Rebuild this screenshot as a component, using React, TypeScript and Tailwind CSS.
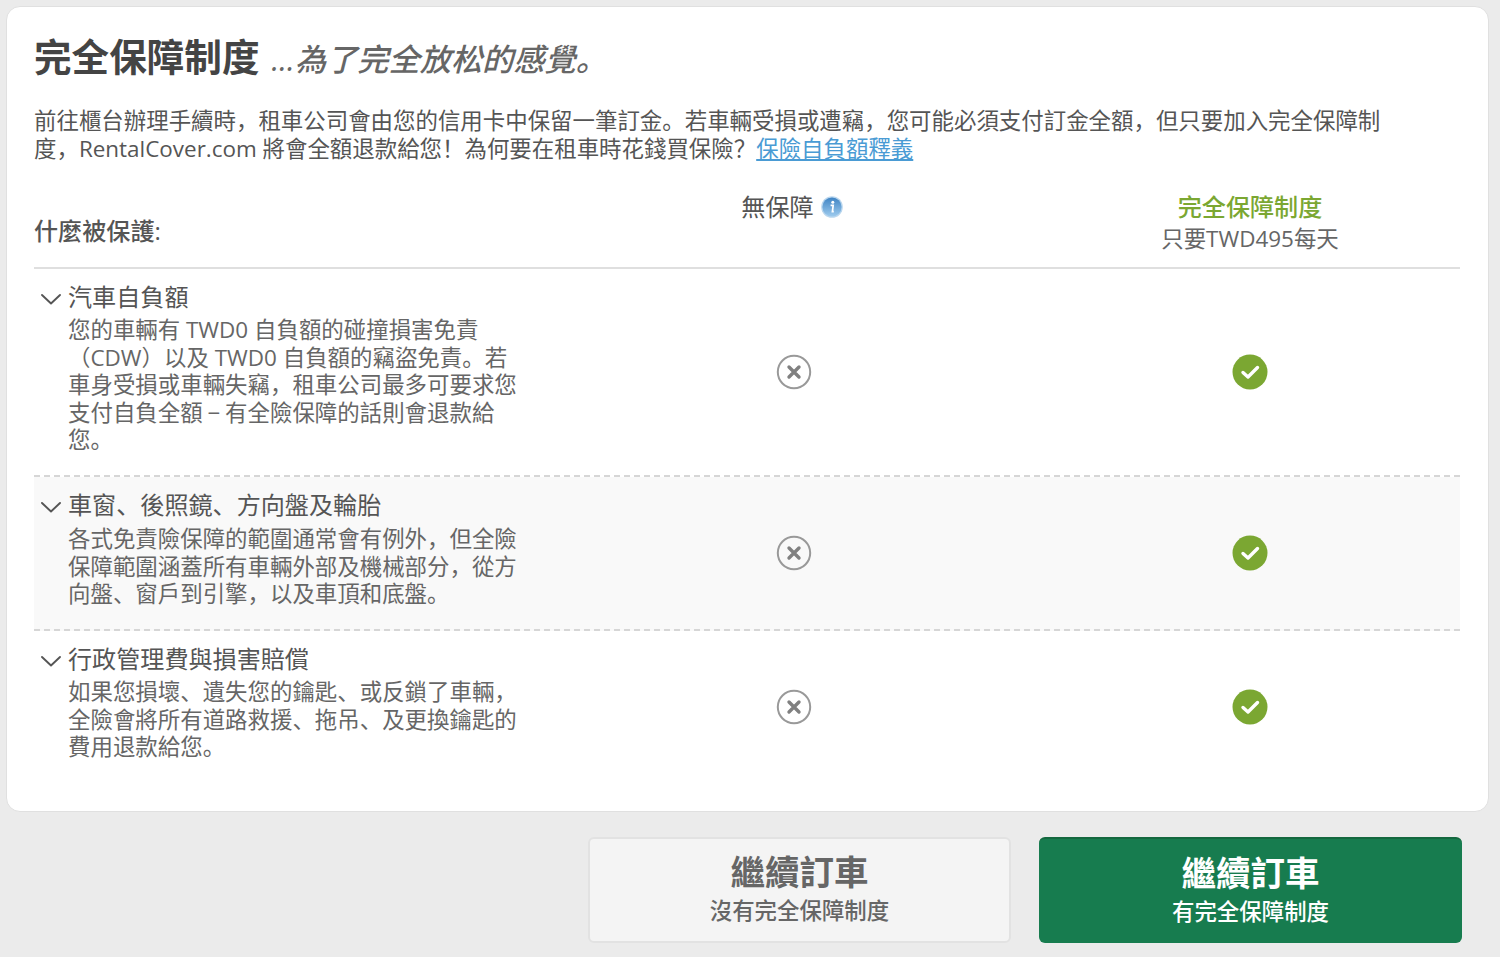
import React from "react";

function XIcon() {
  return (
    <svg width="36" height="36" viewBox="0 0 36 36" fill="none">
      <circle cx="18" cy="18" r="16.2" stroke="#999999" strokeWidth="2" />
      <path d="M13 13L23 23M23 13L13 23" stroke="#808080" strokeWidth="3.4" strokeLinecap="round" />
    </svg>
  );
}

function CheckIcon() {
  return (
    <svg width="36" height="36" viewBox="0 0 36 36" fill="none">
      <circle cx="18" cy="18" r="17.5" fill="#7ba732" />
      <path d="M11 18.5L16 23L25.5 13.5" stroke="#ffffff" strokeWidth="3.4" strokeLinecap="round" strokeLinejoin="round" />
    </svg>
  );
}

function Chevron() {
  return (
    <svg width="22" height="12" viewBox="0 0 22 12" fill="none" className="mt-[11px] shrink-0">
      <path d="M2 2L11 10.5L20 2" stroke="#555555" strokeWidth="1.9" strokeLinecap="round" strokeLinejoin="round" />
    </svg>
  );
}

function InfoIcon() {
  return (
    <svg width="22" height="22" viewBox="0 0 22 22" className="ml-[7px]">
      <defs>
        <linearGradient id="infoG" x1="0" y1="0" x2="0" y2="1">
          <stop offset="0" stopColor="#3f84c4" />
          <stop offset="1" stopColor="#9ecbee" />
        </linearGradient>
      </defs>
      <circle cx="11" cy="11" r="10.8" fill="#b9d6ee" />
      <circle cx="11" cy="11" r="9.6" fill="url(#infoG)" />
      <circle cx="11.8" cy="6.2" r="1.5" fill="#ffffff" />
      <path d="M9.6 9.4H12.2L11.4 15.6H12.8" stroke="#ffffff" strokeWidth="1.7" fill="none" />
    </svg>
  );
}

function Row({ title, desc, shaded, className }: { title: string; desc: React.ReactNode; shaded?: boolean; className: string }) {
  return (
    <div className={`grid grid-cols-[514px_492px_420px] ${shaded ? "bg-[#f9f9f9]" : ""} ${className}`}>
      <div className="flex gap-[6px] pl-[6px] pt-[13px]">
        <Chevron />
        <div className="w-[452px]">
          <div className="text-[24.1px] leading-[30px] text-[#555555]">{title}</div>
          <p className={`${shaded ? "mt-[5px]" : "mt-[4px]"} text-[22.45px] leading-[27.5px] text-[#666666]`}>{desc}</p>
        </div>
      </div>
      <div className="flex items-center justify-center">
        <XIcon />
      </div>
      <div className="flex items-center justify-center">
        <CheckIcon />
      </div>
    </div>
  );
}

export default function App() {
  return (
    <div
      className="h-[957px] w-[1500px] overflow-hidden bg-[#ebebeb] pl-[6px] pt-[6px]"
      style={{ fontFamily: '"Open Sans", "Noto Sans CJK SC", sans-serif' }}
    >
      <div className="h-[806px] w-[1483px] rounded-[14px] border border-[#e0e0e0] bg-white pl-[27px] pt-[26px]">
        <h1 className="flex h-[48px] items-baseline text-[#444444]">
          <span className="text-[37.6px] leading-[48px] font-bold">完全保障制度</span>
          <span className="ml-[12px] text-[31.2px] leading-[48px] font-medium text-[#666666] italic">...為了完全放松的感覺。</span>
        </h1>
        <p className="mt-[26px] w-[1360px] text-[22.45px] leading-[27.5px] text-[#555555]">
          前往櫃台辦理手續時，租車公司會由您的信用卡中保留一筆訂金。若車輛受損或遭竊，您可能必須支付訂金全額，但只要加入完全保障制度，RentalCover.com 將會全額退款給您！為何要在租車時花錢買保險？
          <span className="text-[#4a9bd4] underline">保險自負額釋義</span>
        </p>

        <div className="w-[1426px]">
          <div className="mt-[24px] grid h-[83px] grid-cols-[514px_492px_420px] border-b-2 border-[#dfdfdf]">
            <div className="pt-[27px] text-[24.1px] leading-[36px] font-medium text-[#555555]">什麼被保護:</div>
            <div className="flex items-start justify-center pr-[4px] pt-[5px]">
              <span className="flex items-center text-[24.1px] leading-[32px] text-[#555555]">
                無保障
                <InfoIcon />
              </span>
            </div>
            <div className="pt-[5px] text-center">
              <div className="text-[24.1px] leading-[32px] font-medium text-[#7ba732]">完全保障制度</div>
              <div className="mt-[1px] text-[22.45px] leading-[30px] text-[#666666]">只要TWD495每天</div>
            </div>
          </div>

          <Row
            className="h-[208px] border-b-2 border-dashed border-[#d6d6d6]"
            title="汽車自負額"
            desc={
              <>
                您的車輛有 TWD0 自負額的碰撞損害免責（CDW）以及 TWD0 自負額的竊盜免責。若車身受損或車輛失竊，租車公司最多可要求您支付自負全額
                <span className="inline-block w-[22.45px] text-center font-medium">−</span>
                有全險保障的話則會退款給您。
              </>
            }
          />
          <Row
            shaded
            className="h-[154px] border-b-2 border-dashed border-[#d6d6d6]"
            title="車窗、後照鏡、方向盤及輪胎"
            desc="各式免責險保障的範圍通常會有例外，但全險保障範圍涵蓋所有車輛外部及機械部分，從方向盤、窗戶到引擎，以及車頂和底盤。"
          />
          <Row
            className="h-[152px]"
            title="行政管理費與損害賠償"
            desc="如果您損壞、遺失您的鑰匙、或反鎖了車輛，全險會將所有道路救援、拖吊、及更換鑰匙的費用退款給您。"
          />
        </div>
      </div>

      <div className="mt-[25px] flex w-[1456px] justify-end gap-[28px]">
        <button className="flex h-[106px] w-[423px] flex-col items-center justify-center rounded-[6px] border-2 border-[#e2e2e2] bg-[#f4f4f4] pb-[4px] text-[#666666]">
          <span className="text-[34.5px] leading-[44px] font-semibold">繼續訂車</span>
          <span className="mt-[2px] text-[22.45px] leading-[30px] font-medium">沒有完全保障制度</span>
        </button>
        <button className="flex h-[106px] w-[423px] flex-col items-center justify-center rounded-[6px] border-t-2 border-[#14683f] bg-[#177c4f] pb-[4px] text-white">
          <span className="text-[34.5px] leading-[44px] font-semibold">繼續訂車</span>
          <span className="mt-[2px] text-[22.45px] leading-[30px] font-medium">有完全保障制度</span>
        </button>
      </div>
    </div>
  );
}
